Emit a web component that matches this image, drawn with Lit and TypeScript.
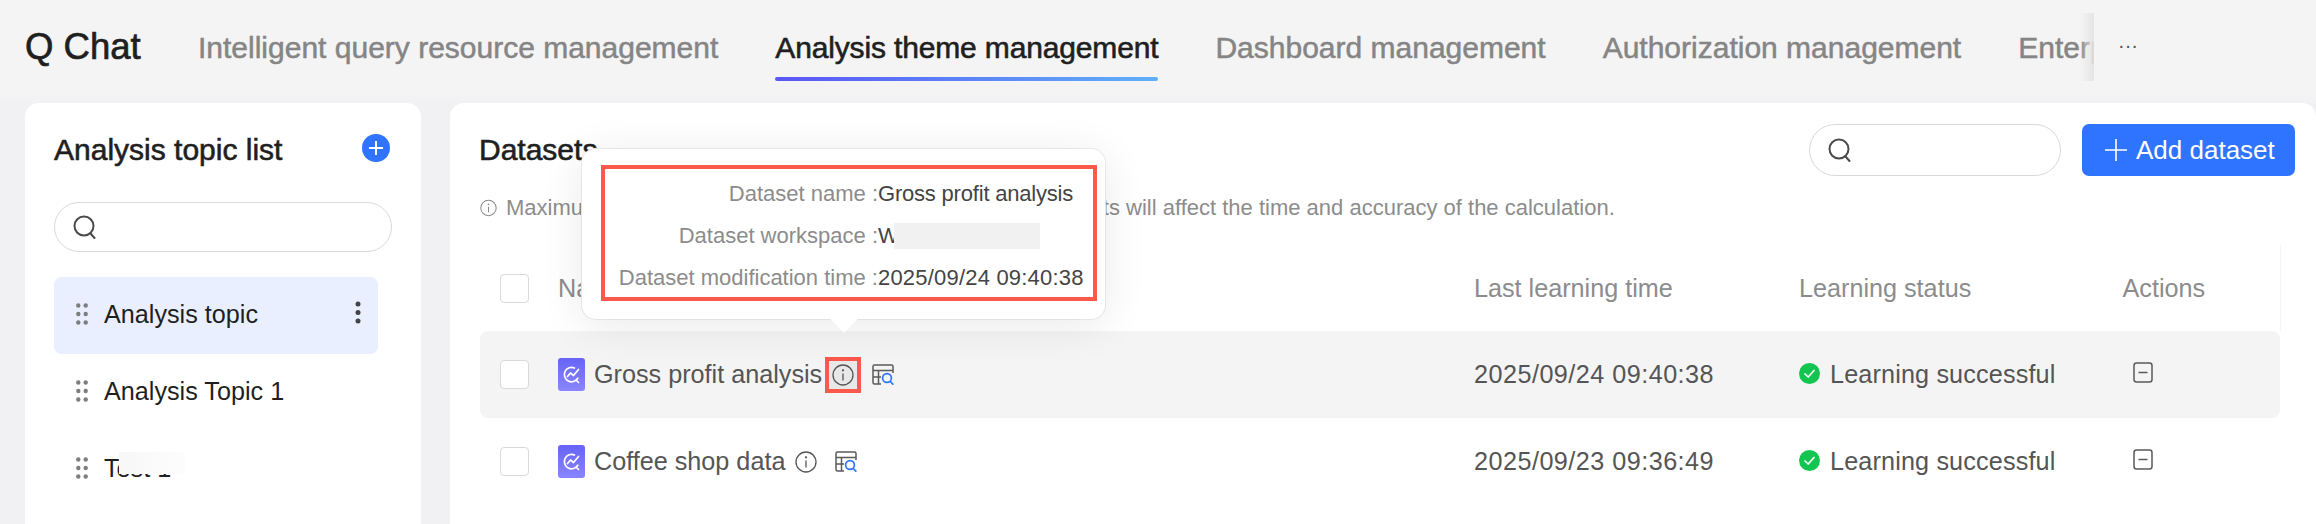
import { LitElement, html, css, svg } from 'lit'
import { customElement } from 'lit/decorators.js'

const tabs = [
  'Intelligent query resource management',
  'Analysis theme management',
  'Dashboard management',
  'Authorization management',
  'Enterprise management',
]

const topics = ['Analysis topic', 'Analysis Topic 1', 'Test 1']

const rows = [
  { name: 'Gross profit analysis', time: '2025/09/24 09:40:38', hover: true },
  { name: 'Coffee shop data', time: '2025/09/23 09:36:49', hover: false },
]

const searchIcon = svg`<svg class="search-icon" viewBox="0 0 24 24" fill="none" stroke="#4a4a4a" stroke-width="2">
  <circle cx="11" cy="11" r="9.500"/><path d="M17.500 18.500l4 4.500" stroke-linecap="round"/></svg>`

const infoIcon = svg`<svg viewBox="0 0 22 22" fill="none" stroke="currentColor" stroke-width="1.300">
  <circle cx="11" cy="11" r="10"/><path d="M11 9.500v7"/><circle cx="11" cy="6.300" r=".5" fill="currentColor"/></svg>`

const gripIcon = svg`<svg class="grip" viewBox="0 0 12 22" fill="#7d7d7d">
  <circle cx="2.300" cy="2.500" r="2.200"/><circle cx="9.700" cy="2.500" r="2.200"/><circle cx="2.300" cy="11" r="2.200"/>
  <circle cx="9.700" cy="11" r="2.200"/><circle cx="2.300" cy="19.500" r="2.200"/><circle cx="9.700" cy="19.500" r="2.200"/></svg>`

const datasetIcon = svg`<svg class="ds-icon" viewBox="0 0 27 33"><defs><linearGradient id="dsg" x1="0" y1="0" x2="0" y2="1">
  <stop offset="0" stop-color="#6764f6"/><stop offset="1" stop-color="#8a85ff"/></linearGradient></defs>
  <rect width="27" height="33" rx="3" fill="url(#dsg)"/>
  <g fill="none" stroke="#fff" stroke-width="1.700" stroke-linecap="round" stroke-linejoin="round">
  <path d="M16.500 10a7.200 7.200 0 1 0 3.300 10.200"/>
  <path d="M9.500 18.500l3-3.500 3 2.500 5-6"/><path d="M18.500 22.500l2 2"/></g></svg>`

const tableIcon = svg`<svg class="table-icon" viewBox="0 0 22 21" fill="none">
  <g stroke="#5a5a5a" stroke-width="1.500"><path d="M9 20H2.500A1.500 1.500 0 0 1 1 18.500V2.500A1.500 1.500 0 0 1 2.500 1h17A1.500 1.500 0 0 1 21 2.500V9"/>
  <path d="M1 6.500h20M1 13h8M6.500 6.500V20"/></g>
  <g stroke="#2f74ff" stroke-width="1.700" stroke-linecap="round"><circle cx="15" cy="14" r="4.400"/><path d="M18.300 17.500l2.500 2.700"/></g></svg>`

const checkIcon = svg`<svg class="check" viewBox="0 0 21 21"><circle cx="10.500" cy="10.500" r="10.500" fill="#12c550"/>
  <path d="M6 11l3.200 3 5.800-6.500" fill="none" stroke="#fff" stroke-width="1.700" stroke-linecap="round" stroke-linejoin="round"/></svg>`

const removeIcon = svg`<svg class="remove" viewBox="0 0 20 21" fill="none" stroke="#5a5a5a" stroke-width="1.500">
  <rect x="1" y="1" width="18" height="19" rx="2.500"/><path d="M5.500 10.500h9"/></svg>`

@customElement('app-root')
export class AppRoot extends LitElement {
  static styles = css`
    :host {
      display: block;
      width: 2316px;
      height: 524px;
      overflow: hidden;
      background: #f4f4f4;
      font-family: 'Liberation Sans', Arial, sans-serif;
      color: #1f1f1f;
    }
    .topbar {
      display: flex;
      align-items: flex-start;
      box-sizing: border-box;
      height: 103px;
      padding: 13px 0 0 25px;
      background: linear-gradient(180deg, #f4f4f4 80%, #f2f2f4);
    }
    .logo {
      font-size: 36.500px;
      line-height: 68px;
      width: 173px;
      flex: none;
      -webkit-text-stroke: 0.7px #1f1f1f;
    }
    .tabs {
      position: relative;
      display: flex;
      gap: 57px;
      width: 1896px;
      height: 68px;
      overflow: hidden;
      flex: none;
    }
    .tabs::after {
      content: '';
      position: absolute;
      right: 0;
      top: 0;
      width: 14px;
      height: 100%;
      background: linear-gradient(90deg, rgba(228, 228, 228, 0), rgba(228, 228, 228, 0.95));
    }
    .tab {
      position: relative;
      flex: none;
      font-size: 30px;
      line-height: 69px;
      color: #858585;
      -webkit-text-stroke: 0.5px #858585;
    }
    .tab.active {
      color: #1f1f1f;
      letter-spacing: -0.15px;
      -webkit-text-stroke: 0.6px #1f1f1f;
    }
    .tab.active::after {
      content: '';
      position: absolute;
      left: 0;
      right: 0;
      bottom: 0;
      height: 4px;
      border-radius: 2px;
      background: linear-gradient(90deg, #5a55f5, #5fb0fa);
    }
    .more {
      margin-left: 24px;
      font-size: 20px;
      line-height: 64px;
      color: #555;
    }
    .main {
      display: flex;
      gap: 29px;
      padding-left: 25px;
      background: #f1f1f4;
    }
    .side {
      width: 396px;
      height: 421px;
      flex: none;
      box-sizing: border-box;
      padding: 29px 29px 0 29px;
      background: #fff;
      border-radius: 14px 14px 0 0;
    }
    .side-head {
      display: flex;
      align-items: center;
      justify-content: space-between;
      padding-right: 2px;
      height: 36px;
      font-size: 30px;
      -webkit-text-stroke: 0.6px #1f1f1f;
    }
    .add-round {
      width: 28px;
      height: 28px;
      margin-top: -4px;
      border-radius: 50%;
      background: #2f74ff;
    }
    .add-round svg {
      display: block;
    }
    .search {
      display: flex;
      align-items: center;
      box-sizing: border-box;
      border: 1.500px solid #d9d9d9;
      background: #fff;
    }
    .search-icon {
      width: 24px;
      height: 24px;
    }
    .side .search {
      margin-top: 34px;
      height: 50px;
      border-radius: 25px;
      padding-left: 18px;
    }
    .topic-list {
      margin-top: 25px;
      width: 324px;
    }
    .topic {
      display: flex;
      align-items: center;
      gap: 16px;
      height: 77px;
      padding-left: 22px;
      font-size: 25.200px;
      box-sizing: border-box;
      border-radius: 8px;
      position: relative;
    }
    .topic.active {
      background: #e9effe;
    }
    .topic span {
      margin-top: -3px;
    }
    .grip {
      width: 12px;
      height: 22px;
      margin-top: -3px;
    }
    .dots {
      position: absolute;
      right: 17px;
      top: 24px;
      width: 6px;
      height: 23px;
    }
    .mask {
      position: absolute;
      left: 65px;
      top: 21px;
      width: 66px;
      height: 22px;
      background: linear-gradient(90deg, #f7f7f7, #fdfdfd);
    }
    .panel {
      position: relative;
      flex: 1;
      height: 421px;
      background: #fff;
      border-radius: 14px 14px 0 0;
      padding: 0 21px 0 30px;
      box-sizing: border-box;
    }
    .panel-head {
      display: flex;
      align-items: center;
      justify-content: space-between;
      height: 73px;
      padding-top: 21px;
      box-sizing: border-box;
    }
    .panel-title {
      font-size: 30px;
      margin-left: -1px;
      -webkit-text-stroke: 0.6px #1f1f1f;
    }
    .panel-tools {
      display: flex;
      align-items: center;
      gap: 21px;
    }
    .panel-tools .search {
      width: 252px;
      height: 52px;
      border-radius: 26px;
      padding-left: 18px;
    }
    .add-btn {
      display: flex;
      align-items: center;
      gap: 9px;
      box-sizing: border-box;
      width: 213px;
      height: 52px;
      padding-left: 23px;
      border-radius: 7px;
      background: #2f74ff;
      color: #fff;
      font-size: 26px;
    }
    .add-btn svg {
      width: 22px;
      height: 24px;
    }
    .note {
      display: flex;
      align-items: center;
      gap: 9px;
      margin-top: 19px;
      height: 26px;
      font-size: 22px;
      color: #8c8c8c;
      white-space: nowrap;
    }
    .note svg {
      width: 17px;
      height: 18px;
    }
    .cols {
      display: grid;
      grid-template-columns: 78px 916px 325px 323.500px 1fr;
      align-items: center;
      margin-right: 15px;
      font-size: 25.200px;
    }
    .head-row {
      margin-top: 24px;
      height: 86px;
      color: #8c8c8c;
      box-shadow: 1px 0 0 #f6f6f6;
    }
    .name {
      display: flex;
      align-items: center;
    }
    .check-box {
      width: 29px;
      height: 29px;
      margin-left: 20px;
      box-sizing: border-box;
      border: 1.500px solid #d9d9d9;
      border-radius: 4px;
      background: #fff;
    }
    .row {
      height: 87px;
      color: #555;
      border-radius: 8px;
    }
    .row.hover {
      background: #f4f4f4;
    }
    .ds-icon {
      width: 27px;
      height: 33px;
      flex: none;
      margin-right: 9px;
    }
    .info {
      display: flex;
      align-items: center;
      justify-content: center;
      width: 36px;
      height: 36px;
      margin-left: 3px;
      box-sizing: border-box;
      color: #555;
    }
    .info svg {
      width: 22px;
      height: 22px;
    }
    .info.marked {
      border: 4px solid #fa5a4b;
      background: #e8e8e8;
    }
    .table-icon {
      width: 22px;
      height: 21px;
      margin-left: 11px;
    }
    .time {
      letter-spacing: 0.47px;
    }
    .status {
      display: flex;
      align-items: center;
      gap: 10px;
      letter-spacing: 0.15px;
    }
    .check {
      width: 21px;
      height: 21px;
      margin-top: -3px;
    }
    .remove {
      width: 20px;
      height: 21px;
      margin: 0 0 4px 10px;
      display: block;
    }
    .pop {
      position: absolute;
      left: 132px;
      top: 46px;
      width: 523px;
      height: 170px;
      box-sizing: border-box;
      padding: 16px 8px 0 19px;
      background: #fff;
      border-radius: 14px;
      box-shadow: 0 6px 44px rgba(0, 0, 0, 0.09), 0 0 0 1px #eee;
    }
    .pop::after {
      content: '';
      position: absolute;
      left: 252px;
      bottom: -10px;
      width: 20px;
      height: 20px;
      background: #fff;
      transform: rotate(45deg);
      clip-path: polygon(100% 0, 100% 100%, 0 100%);
    }
    .pop-box {
      box-sizing: border-box;
      height: 136px;
      border: 4px solid #fa5a4b;
      padding-top: 4px;
    }
    .pop-line {
      display: flex;
      height: 42px;
      align-items: center;
      font-size: 22px;
      white-space: nowrap;
    }
    .pop-key {
      width: 273px;
      flex: none;
      text-align: right;
      color: #8c8c8c;
    }
    .pop-val {
      display: flex;
      align-items: center;
      color: #444;
      letter-spacing: -0.2px;
    }
    .pop-val.date {
      letter-spacing: 0.2px;
    }
    .redact {
      width: 146px;
      height: 26px;
      margin-left: -5px;
      background: #f2f1f1;
    }
  `

  render() {
    return html`
      <div class="topbar">
        <div class="logo">Q Chat</div>
        <div class="tabs">
          ${tabs.map((t, i) => html`<div class="tab ${i === 1 ? 'active' : ''}">${t}</div>`)}
        </div>
        <div class="more">···</div>
      </div>
      <div class="main">
        <div class="side">
          <div class="side-head">
            <span>Analysis topic list</span>
            <span class="add-round">
              <svg viewBox="0 0 28 28" width="28" height="28" stroke="#fff" stroke-width="2"><path d="M14 7v14M7 14h14"/></svg>
            </span>
          </div>
          <div class="search">${searchIcon}</div>
          <div class="topic-list">
            ${topics.map(
              (t, i) => html`<div class="topic ${i === 0 ? 'active' : ''}">
                ${gripIcon}<span>${t}</span>
                ${i === 0
                  ? html`<svg class="dots" viewBox="0 0 6 23" fill="#444"><circle cx="3" cy="3" r="2.500"/><circle cx="3" cy="11.500" r="2.500"/><circle cx="3" cy="20" r="2.500"/></svg>`
                  : ''}
                ${i === 2 ? html`<div class="mask"></div>` : ''}
              </div>`
            )}
          </div>
        </div>
        <div class="panel">
          <div class="panel-head">
            <div class="panel-title">Datasets</div>
            <div class="panel-tools">
              <div class="search">${searchIcon}</div>
              <div class="add-btn">
                <svg viewBox="0 0 22 24" stroke="#fff" stroke-width="1.600"><path d="M11 1v22M0 12h22"/></svg>
                <span>Add dataset</span>
              </div>
            </div>
          </div>
          <div class="note">
            ${infoIcon}
            <span>Maximum of 10 datasets can be added, and too many datasets will affect the time and accuracy of the calculation.</span>
          </div>
          <div class="cols head-row">
            <div class="check-box"></div>
            <div>Name</div>
            <div>Last learning time</div>
            <div>Learning status</div>
            <div>Actions</div>
          </div>
          ${rows.map(
            (r) => html`<div class="cols row ${r.hover ? 'hover' : ''}">
              <div class="check-box"></div>
              <div class="name">
                ${datasetIcon}<span>${r.name}</span>
                <span class="info ${r.hover ? 'marked' : ''}">${infoIcon}</span>
                ${tableIcon}
              </div>
              <div class="time">${r.time}</div>
              <div class="status">${checkIcon}<span>Learning successful</span></div>
              <div>${removeIcon}</div>
            </div>`
          )}
          <div class="pop">
            <div class="pop-box">
              <div class="pop-line"><span class="pop-key">Dataset name :</span><span class="pop-val">Gross profit analysis</span></div>
              <div class="pop-line"><span class="pop-key">Dataset workspace :</span><span class="pop-val">W<span class="redact"></span></span></div>
              <div class="pop-line"><span class="pop-key">Dataset modification time :</span><span class="pop-val date">2025/09/24 09:40:38</span></div>
            </div>
          </div>
        </div>
      </div>
    `
  }
}
